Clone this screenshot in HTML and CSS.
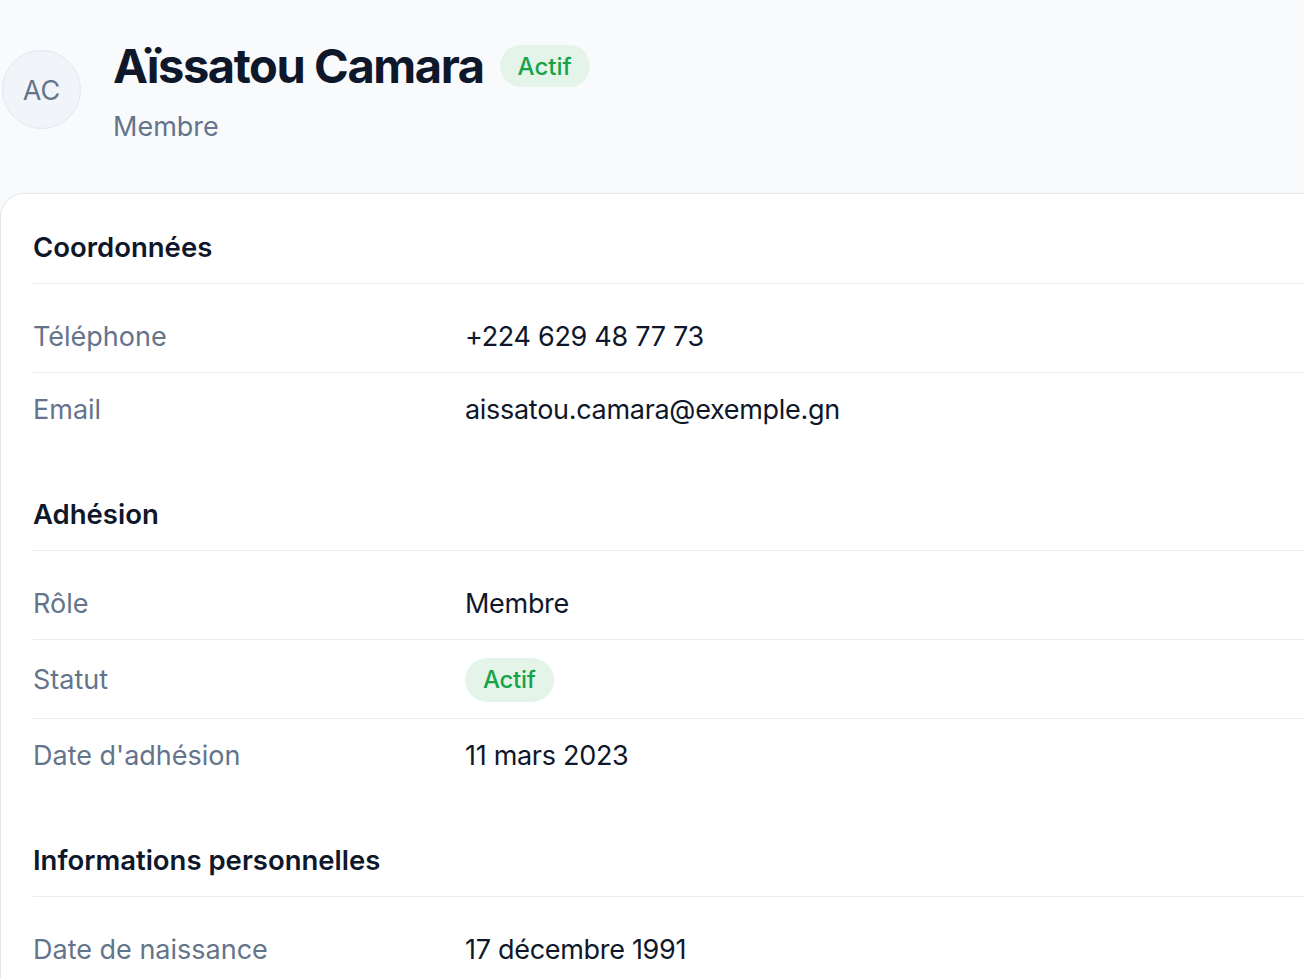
FILE: index.html
```html
<!DOCTYPE html>
<html lang="fr">
<head>
<meta charset="utf-8">
<title>Aïssatou Camara</title>
<link rel="stylesheet" href="styles.css">
</head>
<body>
<div class="page">
  <header class="profile">
    <div class="avatar">AC</div>
    <div class="identity">
      <div class="name-line">
        <h1 class="name">Aïssatou Camara</h1>
        <span class="badge badge-lg">Actif</span>
      </div>
      <div class="role">Membre</div>
    </div>
  </header>

  <section class="card">
    <div class="group">
      <h2 class="group-title">Coordonnées</h2>
      <div class="rows">
        <div class="row"><div class="label">Téléphone</div><div class="value">+224 629 48 77 73</div></div>
        <div class="row"><div class="label">Email</div><div class="value">aissatou.camara@exemple.gn</div></div>
      </div>
    </div>

    <div class="group">
      <h2 class="group-title">Adhésion</h2>
      <div class="rows">
        <div class="row"><div class="label">Rôle</div><div class="value">Membre</div></div>
        <div class="row"><div class="label">Statut</div><div class="value"><span class="badge">Actif</span></div></div>
        <div class="row"><div class="label">Date d'adhésion</div><div class="value">11 mars 2023</div></div>
      </div>
    </div>

    <div class="group">
      <h2 class="group-title">Informations personnelles</h2>
      <div class="rows">
        <div class="row"><div class="label">Date de naissance</div><div class="value">17 décembre 1991</div></div>
      </div>
    </div>
  </section>
</div>
</body>
</html>
```

FILE: styles.css
```css
* { box-sizing: border-box; }
html, body {
  margin: 0;
  padding: 0;
  background: #f8fafc;
  overflow: hidden;
}
body {
  font-family: Inter, "Noto Sans", sans-serif;
  color: #0f172a;
}
.page {
  width: 1340px;
}
.profile {
  display: flex;
  align-items: flex-start;
  gap: 32px;
  padding: 40px 0 0 2px;
  height: 193px;
}
.avatar {
  width: 79px;
  height: 79px;
  margin-top: 10px;
  padding-top: 2px;
  border-radius: 50%;
  background: #f1f5f9;
  border: 1px solid #e2e8f0;
  color: #64748b;
  font-size: 27px;
  display: flex;
  align-items: center;
  justify-content: center;
}
.identity {
  display: flex;
  flex-direction: column;
}
.name-line {
  display: flex;
  align-items: center;
  gap: 16px;
}
.name {
  margin: 0;
  font-size: 47px;
  line-height: 52px;
  font-weight: 700;
  letter-spacing: -0.03em;
}
.role {
  margin-top: 18px;
  font-size: 27px;
  line-height: 34px;
  color: #64748b;
}
.badge {
  display: inline-flex;
  align-items: center;
  height: 44px;
  padding: 0 18px;
  border-radius: 22px;
  background: #e4f4e9;
  color: #16a34a;
  font-size: 24px;
  font-weight: 500;
}
.badge-lg {
  height: 42px;
}
.card {
  background: #ffffff;
  border: 1px solid #e2e8f0;
  border-right: none;
  border-radius: 24px 0 0 0;
  padding: 35px 0 0 32px;
  min-height: 800px;
}
.group + .group {
  margin-top: 51px;
}
.group-title {
  margin: 0;
  font-size: 27.5px;
  line-height: 36px;
  font-weight: 600;
  padding-bottom: 18px;
  border-bottom: 1px solid #e8ebf0;
}
.rows {
  margin-top: 16px;
}
.row {
  display: grid;
  grid-template-columns: 432px 1fr;
  align-items: center;
  padding: 18px 0 16px;
  min-height: 72px;
  font-size: 27px;
  line-height: 38px;
}
.row + .row {
  border-top: 1px solid #e8ebf0;
}
.label {
  color: #64748b;
}
.value {
  color: #0f172a;
  letter-spacing: -0.3px;
}
```
